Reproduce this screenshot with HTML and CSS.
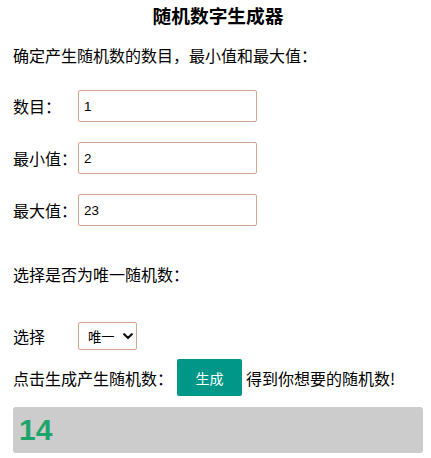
FILE: index.html
```html
<!DOCTYPE html>
<html lang="zh-CN">
<head>
<meta charset="utf-8">
<title>随机数字生成器</title>
<link rel="stylesheet" href="styles.css">
</head>
<body>
<div class="page">
  <h3 class="title">随机数字生成器</h3>
  <p class="intro">确定产生随机数的数目，最小值和最大值：</p>
  <div class="field first">
    <label class="label">数目：</label>
    <input class="num" type="text" value="1">
  </div>
  <div class="field">
    <label class="label">最小值：</label>
    <input class="num" type="text" value="2">
  </div>
  <div class="field">
    <label class="label">最大值：</label>
    <input class="num" type="text" value="23">
  </div>
  <p class="question">选择是否为唯一随机数：</p>
  <div class="field pick">
    <label class="label">选择</label>
    <span class="select-wrap">
      <select class="choice">
        <option>唯一</option>
        <option>不唯一</option>
      </select>
      <svg class="chevron" width="10" height="7" viewBox="0 0 10 7"><path d="M1.2 1.2 L5 5 L8.8 1.2" fill="none" stroke="#111" stroke-width="2.2" stroke-linecap="round" stroke-linejoin="round"/></svg>
    </span>
  </div>
  <div class="action">
    <span>点击生成产生随机数：</span>
    <button class="gen" type="button">生成</button>
    <span>得到你想要的随机数!</span>
  </div>
  <div class="result">14</div>
</div>
</body>
</html>
```
FILE: styles.css
```css
html, body {
  margin: 0;
  padding: 0;
  background: #fff;
}
.page {
  padding: 0 8px 0 13px;
  font-family: "Noto Sans CJK SC", "Noto Sans", sans-serif;
  font-size: 16px;
  color: #000;
}
.title {
  margin: 0;
  text-align: center;
  font-size: 18.72px;
  font-weight: bold;
  line-height: 30px;
}
.intro {
  margin: 13px 0 0;
  line-height: 24px;
}
.field {
  display: flex;
  align-items: center;
  margin-top: 20px;
}
.field.first {
  margin-top: 23px;
}
.label {
  width: 65px;
  flex: none;
  line-height: 24px;
}
.num {
  box-sizing: border-box;
  width: 179px;
  height: 32px;
  margin: 0;
  padding: 0 5px;
  border: 1px solid #d2a690;
  border-radius: 2px;
  font-family: "Liberation Sans", Arial, sans-serif;
  font-size: 13.33px;
  color: #000;
  outline: none;
}
.question {
  margin: 36px 0 0;
  line-height: 24px;
}
.field.pick {
  margin-top: 36px;
}
.select-wrap {
  position: relative;
  display: inline-block;
}
.choice {
  -webkit-appearance: none;
  appearance: none;
  box-sizing: border-box;
  width: 59px;
  height: 28px;
  margin: 0;
  padding: 0 0 0 9px;
  border: 1px solid #d2a690;
  border-radius: 2px;
  background: #fff;
  font-family: "Noto Sans CJK SC", sans-serif;
  font-size: 13.33px;
  color: #000;
  outline: none;
}
.chevron {
  position: absolute;
  left: 45px;
  top: 11px;
  pointer-events: none;
}
.action {
  display: flex;
  align-items: center;
  gap: 4px;
  margin-top: 9px;
  line-height: 24px;
}
.gen {
  box-sizing: border-box;
  width: 65px;
  height: 37px;
  margin: 0;
  padding: 0;
  border: none;
  border-radius: 2px;
  background: #009688;
  color: #fff;
  font-family: "Noto Sans CJK SC", sans-serif;
  font-size: 14px;
}
.result {
  margin-top: 11px;
  height: 46px;
  box-sizing: border-box;
  padding: 5px 6px;
  background: #cccccc;
  border-radius: 3px;
  font-family: "Liberation Sans", Arial, sans-serif;
  font-size: 30px;
  font-weight: bold;
  line-height: 36px;
  color: #1fa46c;
}
```
